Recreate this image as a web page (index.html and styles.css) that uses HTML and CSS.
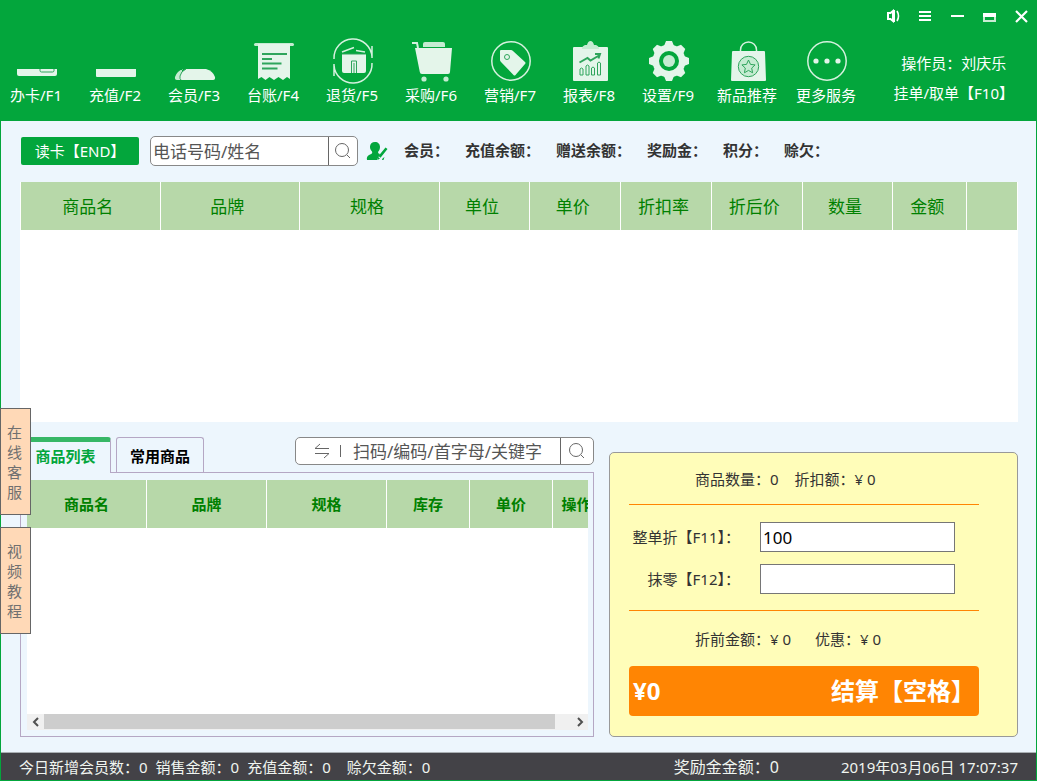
FILE: index.html
```html
<!DOCTYPE html>
<html lang="zh-CN">
<head>
  <meta charset="UTF-8" />
  <meta name="viewport" content="width=device-width, initial-scale=1.0"/>
  <title>收银台</title>
  <link rel="stylesheet" href="styles.css">
</head>
<body>
  <div class="app">
    <!-- Header -->
    <header class="header">
      <div class="window-bar">
        <button class="window-button" aria-label="声音">
          <svg width="14" height="14" viewBox="0 0 14 14" fill="none" stroke="#fff" stroke-width="2"><path d="M2 4h2.500L7 2v10L4.500 10H2z"/><path d="M8 1v12"/><path d="M11 2q3 5 0 10" stroke-width="1.600"/></svg>
        </button>
        <button class="window-button" aria-label="菜单">
          <svg width="14" height="14" viewBox="0 0 14 14" fill="#fff"><path d="M1 2h12v2H1zM1 6h12v2H1zM1 10h12v2H1z"/></svg>
        </button>
        <button class="window-button" aria-label="最小化">
          <svg width="14" height="14" viewBox="0 0 14 14" fill="#fff"><path d="M1 6h13v2H1z"/></svg>
        </button>
        <button class="window-button" aria-label="最大化">
          <svg width="14" height="14" viewBox="0 0 14 14"><path d="M1 4h13v4H1z" fill="#fff"/><path d="M1 8h13v5H1zM3 8v3h9V8z" fill="#c9ecd3" fill-rule="evenodd"/></svg>
        </button>
        <button class="window-button" aria-label="关闭">
          <svg width="14" height="14" viewBox="0 0 14 14" stroke="#fff" stroke-width="2.200"><path d="M2 2l11 11M13 2L2 13"/></svg>
        </button>
      </div>

      <div class="header-main">
        <nav class="menu">
          <a class="menu-item" href="#">
            <svg viewBox="0 0 41 41"><path class="light" d="M1 28h40v5q0 2-2 2H3q-2 0-2-2z"/><path class="line" d="M24 28v1.500q0 1.500 1.500 1.500h11q1.500 0 1.500-1.500V28"/></svg>
            <span>办卡/F1</span>
          </a>
          <a class="menu-item" href="#">
            <svg viewBox="0 0 41 41"><path class="light" d="M1 28h40v7q0 1-1 1H2q-1 0-1-1z"/></svg>
            <span>充值/F2</span>
          </a>
          <a class="menu-item" href="#">
            <svg viewBox="0 0 41 41"><path class="soft" d="M9 28Q3 30 1 36q-.500 3 2 3h5V28z"/><path class="light" d="M12 28h20q7 2 9 8 .500 3-2 3H8q-3 0-2-4 2-5 6-7z"/><path class="line" d="M12 28q-5 2-6 7-.500 3 1 4"/></svg>
            <span>会员/F3</span>
          </a>
          <a class="menu-item" href="#">
            <svg viewBox="0 0 41 41"><rect class="soft" x="1" y="2" width="40" height="3" rx="1.500"/><path class="light" d="M5 3h32v35l-3-2-4 3-4.500-3-4.500 3-4.500-3-4 3-4-3L5 38z"/><path class="line thick" d="M9 13h25M9 18h10M9 22.500h19.500M9 27.500h15.500"/></svg>
            <span>台账/F4</span>
          </a>
          <a class="menu-item" href="#">
            <svg viewBox="0 0 41 41"><path class="stroke" d="M2 18a19 19 0 0 1 38-2M40 22a19 19 0 0 1-38 2M40 5v12M2 35V23"/><path class="light" d="M10 13h24v17q0 2-2 2H12q-2 0-2-2z"/><path class="stroke" d="M10 11l12-4.500M24 9.500l9 1.500"/><path class="line" d="M19.500 32V20h5v12M22 22v10M10 13h24"/></svg>
            <span>退货/F5</span>
          </a>
          <a class="menu-item" href="#">
            <svg viewBox="0 0 41 41"><path class="soft" d="M12 6V3q0-2 2-2h18q2 0 2 2v3z"/><path class="light" d="M4 7h37l-2 24q0 2-2 2H11q-2 0-2.200-2z"/><path class="stroke thick" d="M1 2h5l1 5"/><circle class="soft" cx="13" cy="38" r="2.600"/><circle class="soft" cx="35" cy="38" r="2.600"/></svg>
            <span>采购/F6</span>
          </a>
          <a class="menu-item" href="#">
            <svg viewBox="0 0 41 41"><circle class="stroke" cx="21" cy="20" r="19.200"/><path class="light" d="M11 9h10q1 0 2 1l12 11q1 1 0 2L25.500 34q-1 1-2 0L11 21q-1-1-1-2v-9q0-1 1-1z"/><circle class="line" cx="17" cy="16" r="2.500"/></svg>
            <span>营销/F7</span>
          </a>
          <a class="menu-item" href="#">
            <svg viewBox="0 0 41 41"><rect class="light" x="4" y="6" width="35" height="34" rx="1"/><path class="soft" d="M13 8q0-3 3-4h2q1-4 3.500-4T25 4h2q3 1 3 4z"/><path class="line thick" d="M10.500 21.500l8-4.500 3 2.500 8.500-5M26 13h5l-1.500 4.500"/><path class="line" d="M11 34v-6q1.500-2 3 0v6zM17 34v-9q1.500-2 3 0v9zM22.500 34v-7q1.500-2 3 0v7zM28.500 34V22q1.500-2 3 0v12z"/></svg>
            <span>报表/F8</span>
          </a>
          <a class="menu-item" href="#">
            <svg viewBox="0 0 41 41"><circle class="light" cx="21" cy="20" r="16.500"/><g class="light"><path id="tooth" d="M16 5l2-5h6l2 5v30l-2 5h-6l-2-5z"/><use href="#tooth" transform="rotate(45 21 20)"/><use href="#tooth" transform="rotate(90 21 20)"/><use href="#tooth" transform="rotate(135 21 20)"/></g><circle cx="21" cy="20" r="10" fill="#03a63c"/><circle class="soft" cx="21" cy="20" r="6"/></svg>
            <span>设置/F9</span>
          </a>
          <a class="menu-item" href="#">
            <svg viewBox="0 0 41 41"><path class="stroke" d="M13.500 10V9a8 8 0 0 1 16 0v1"/><path class="light" d="M6 10h31q1 0 1 1l1 28q0 1-1 1H5q-1 0-1-1l1-28q0-1 1-1z"/><circle class="soft ring" cx="21.500" cy="25.500" r="10.200"/><path class="line" d="M21.500 19l2 4.400 4.600.500-3.400 3.200.900 4.700-4.100-2.400-4.100 2.400.900-4.700-3.400-3.200 4.600-.500z"/></svg>
            <span>新品推荐</span>
          </a>
          <a class="menu-item" href="#">
            <svg viewBox="0 0 41 41"><circle class="stroke" cx="21" cy="20" r="19.200"/><circle class="light" cx="10" cy="20" r="2.600"/><circle class="light" cx="21" cy="20" r="2.600"/><circle class="light" cx="32" cy="20" r="2.600"/></svg>
            <span>更多服务</span>
          </a>
        </nav>
        <div class="operator">
          <span>操作员：刘庆乐</span>
          <a href="#">挂单/取单【F10】</a>
        </div>
      </div>
    </header>

    <main class="main">
      <!-- Member search -->
      <div class="member-bar">
        <button class="read-card">读卡【END】</button>
        <form class="search member-search">
          <input type="text" placeholder="电话号码/姓名" aria-label="电话号码/姓名">
          <button type="button" aria-label="搜索会员">
            <svg width="18" height="18" viewBox="0 0 18 18" fill="none" stroke="#666" stroke-width="1"><circle cx="8" cy="8" r="6.500"/><path d="M13 13l3 3"/></svg>
          </button>
        </form>
        <button class="edit-member" aria-label="编辑会员">
          <svg width="22" height="20" viewBox="0 0 22 20" fill="#03a63c"><path d="M9 1c3 0 5 2 5 5 0 2-1 4-2 5 0 1 1 2 2 2l-3 6H1q-1-4 3-5.500 3-1 2-3C4 8 4 7 4 5.500 4 3 6 1 9 1z"/><path d="M19.500 6.500l2 1.600-7 8.600-2-1.600zM12 16l2 1.600L11.500 19zM16.500 17.500l2-1.500-1 3h-1.500z"/></svg>
        </button>
        <div class="member-info">
          <span>会员：</span>
          <span>充值余额：</span>
          <span>赠送余额：</span>
          <span>奖励金：</span>
          <span>积分：</span>
          <span>赊欠：</span>
        </div>
      </div>

      <!-- Cart -->
      <div class="cart">
        <table class="table">
          <colgroup>
            <col class="w-140"><col class="w-140"><col class="w-140"><col class="w-91"><col class="w-91">
            <col class="w-91"><col class="w-91"><col class="w-91"><col class="w-74"><col>
          </colgroup>
          <thead>
            <tr>
              <th>商品名</th><th>品牌</th><th>规格</th><th>单位</th><th>单价</th>
              <th>折扣率</th><th>折后价</th><th>数量</th><th>金额</th><th></th>
            </tr>
          </thead>
        </table>
      </div>

      <div class="bottom">
        <!-- Goods list -->
        <section class="goods">
          <div class="goods-top">
            <button class="tab active">商品列表</button>
            <button class="tab">常用商品</button>
            <form class="search scan-search">
              <svg width="18" height="16" viewBox="0 0 18 16" fill="none" stroke="#666"><path d="M16 5.500H2l5-4.500M2 10.500h14L11 15"/></svg>
              <i class="divider"></i>
              <input type="text" placeholder="扫码/编码/首字母/关键字" aria-label="扫码/编码/首字母/关键字">
              <button type="button" aria-label="搜索商品">
                <svg width="18" height="18" viewBox="0 0 18 18" fill="none" stroke="#666" stroke-width="1"><circle cx="8" cy="8" r="6.500"/><path d="M13 13l3 3"/></svg>
              </button>
            </form>
          </div>
          <div class="goods-panel">
            <div class="goods-list">
              <table class="table goods-table">
                <colgroup>
                  <col class="w-120"><col class="w-120"><col class="w-120"><col class="w-83"><col class="w-83"><col>
                </colgroup>
                <thead>
                  <tr><th>商品名</th><th>品牌</th><th>规格</th><th>库存</th><th>单价</th><th>操作</th></tr>
                </thead>
              </table>
            </div>
            <div class="scrollbar">
              <button aria-label="向左"><svg width="8" height="10" viewBox="0 0 8 10"><path d="M6 1L2 5l4 4" fill="none" stroke="#505050" stroke-width="2"/></svg></button>
              <div class="scroll-track"><div class="scroll-thumb"></div></div>
              <button aria-label="向右"><svg width="8" height="10" viewBox="0 0 8 10"><path d="M2 1l4 4-4 4" fill="none" stroke="#505050" stroke-width="2"/></svg></button>
            </div>
          </div>
        </section>

        <!-- Checkout -->
        <section class="checkout">
          <div class="summary">
            <span>商品数量：0</span>
            <span>折扣额：¥ 0</span>
          </div>
          <div class="fields">
            <label for="discount">整单折【F11】：</label>
            <input type="text" id="discount" value="100">
            <label for="round">抹零【F12】：</label>
            <input type="text" id="round">
          </div>
          <div class="summary totals">
            <span>折前金额：¥ 0</span>
            <span>优惠：¥ 0</span>
          </div>
          <button class="pay"><span>¥0</span><span>结算【空格】</span></button>
        </section>
      </div>
    </main>

    <footer class="footer">
      <span>今日新增会员数：0</span>
      <span>销售金额：0</span>
      <span>充值金额：0</span>
      <span class="debt">赊欠金额：0</span>
      <span class="reward">奖励金金额：0</span>
      <span class="clock">2019年03月06日 17:07:37</span>
    </footer>

    <!-- Floating side buttons -->
    <div class="side">
      <button>在线客服</button>
      <button>视频教程</button>
    </div>
  </div>
</body>
</html>
```
FILE: styles.css
```css
* {
  box-sizing: border-box;
}

body {
  margin: 0;
  font-family: "Noto Sans", "Noto Sans CJK SC", sans-serif;
  font-size: 15px;
  line-height: 20px;
  color: #333;
}

button,
input {
  font: inherit;
  color: inherit;
  margin: 0;
  padding: 0;
  border: none;
  background: none;
}

button {
  cursor: pointer;
}

a {
  color: inherit;
  text-decoration: none;
}

svg {
  display: block;
}

.app {
  position: relative;
  min-height: 100vh;
  display: flex;
  flex-direction: column;
  border: 1px solid #03a63c;
  background-color: #edf6fd;
}

/* header */
.header {
  height: 120px;
  background-color: #03a63c;
  color: #fff;
}

.window-bar {
  display: flex;
  justify-content: flex-end;
  gap: 2px;
  height: 30px;
}

.window-button {
  width: 30px;
  display: flex;
  align-items: center;
  justify-content: center;
}

.header-main {
  display: flex;
  justify-content: space-between;
  padding-top: 10px;
}

.menu {
  display: flex;
  gap: 9px;
}

.menu-item {
  width: 70px;
  display: flex;
  flex-direction: column;
  align-items: center;
  gap: 3px;
  white-space: nowrap;
}

.menu-item svg {
  width: 41px;
  height: 41px;
  overflow: visible;
}

.light {
  fill: #e4f5ea;
}

.soft {
  fill: #c5ecd2;
}

.line {
  fill: none;
  stroke: #2fa55c;
  stroke-width: 1;
}

.stroke {
  fill: none;
  stroke: #d5f1de;
  stroke-width: 1.5;
}

.ring {
  stroke: #2fa55c;
}

.line.thick,
.stroke.thick {
  stroke-width: 2;
}

.operator {
  display: flex;
  flex-direction: column;
  align-items: center;
  gap: 10px;
  padding: 12px 22px 0 0;
  white-space: nowrap;
}

/* main */
.main {
  flex: 1;
  display: flex;
  flex-direction: column;
  padding: 15px 18px 15px 19px;
}

.member-bar {
  display: flex;
  align-items: center;
  margin-bottom: 16px;
}

.read-card {
  width: 118px;
  height: 28px;
  margin: 0 11px 0 1px;
  background-color: #03a63c;
  color: #fff;
  border-radius: 2px;
}

.search {
  display: flex;
  align-items: center;
  border: 1px solid #888;
  border-radius: 5px;
  background-color: #fff;
  font-size: 17px;
}

.search input {
  flex: 1;
  min-width: 0;
  height: 100%;
  outline: none;
}

.search input::placeholder {
  color: #555;
}

.search button {
  width: 29px;
  height: 100%;
  display: flex;
  align-items: center;
  justify-content: center;
  border-left: 1px solid #666;
}

.member-search {
  width: 208px;
  height: 30px;
}

.member-search input {
  padding-left: 2px;
}

.edit-member {
  margin: 0 16px 0 8px;
}

.member-info {
  display: flex;
  gap: 16px;
  padding-bottom: 2px;
  font-weight: bold;
}

.cart {
  flex: 1;
  min-height: 240px;
  padding-left: 1px;
  background-color: #fff;
}

.table {
  width: 100%;
  table-layout: fixed;
  border-collapse: separate;
  border-spacing: 0;
  color: #008000;
}

.table th {
  height: 48px;
  padding: 2px 5px 0 0;
  background-color: #b7d8a9;
  border-right: 1px solid #fff;
  font-weight: normal;
  font-size: 17px;
  white-space: nowrap;
}

.w-140 { width: 14%; }
.w-91 { width: 9.1%; }
.w-74 { width: 7.4%; }
.w-120 { width: 120px; }
.w-83 { width: 83px; }

.bottom {
  display: grid;
  grid-template-columns: 574fr 409fr;
  gap: 15px;
  padding-top: 15px;
}

/* goods list */
.goods {
  min-width: 0;
}

.goods-top {
  display: flex;
  height: 36px;
}

.tab {
  width: 88px;
  height: 35px;
  padding-top: 2px;
  border: 1px solid #b5a7c4;
  border-bottom: none;
  border-radius: 3px 3px 0 0;
  color: #000;
  font-weight: bold;
}

.tab.active {
  width: 91px;
  height: 36px;
  margin-right: 5px;
  padding: 0 0 3px;
  border-top: 5px solid #37b766;
  background-color: #edf6fd;
  color: #03a63c;
  z-index: 1;
}

.scan-search {
  width: 299px;
  height: 28px;
  margin-left: auto;
}

.scan-search > svg {
  margin-left: 17px;
}

.divider {
  width: 1px;
  height: 12px;
  margin: 0 12px 0 9px;
  background-color: #666;
}

.scan-search button {
  width: 33px;
}

.goods-panel {
  margin-top: -1px;
  padding: 7px 5px 6px 6px;
  border: 1px solid #b5a7c4;
}

.goods-list {
  height: 234px;
  overflow: hidden;
  background-color: #fff;
}

.goods-table {
  width: 574px;
}

.goods-table th {
  padding: 0;
  font-size: 15px;
  font-weight: bold;
}

.scrollbar {
  display: flex;
  height: 16px;
  background-color: #f0f0f0;
}

.scrollbar button {
  width: 17px;
  display: flex;
  align-items: center;
  justify-content: center;
}

.scroll-track {
  flex: 1;
}

.scroll-thumb {
  width: 97%;
  height: 15px;
  background-color: #cdcdcd;
}

/* checkout */
.checkout {
  min-width: 0;
  margin-top: 15px;
  padding: 0 38px 20px 19px;
  border: 1px solid #999;
  border-radius: 5px;
  background-color: #fffdb9;
}

.summary {
  display: flex;
  align-items: center;
  gap: 16px;
  height: 51px;
  padding-left: 66px;
  white-space: nowrap;
}

.totals {
  height: 55px;
  gap: 24px;
}

.fields {
  display: grid;
  grid-template-columns: 1fr 195px;
  gap: 12px 20px;
  align-items: center;
  padding: 17px 24px 16px 0;
  border-top: 1px solid #ff8503;
  border-bottom: 1px solid #ff8503;
}

.fields label {
  text-align: right;
  white-space: nowrap;
}

.fields input {
  width: 100%;
  height: 30px;
  padding: 0 2px;
  border: 1px solid #767676;
  background-color: #fff;
  color: #000;
  font-size: 17px;
}

.pay {
  width: 100%;
  height: 50px;
  padding: 0 4px;
  display: flex;
  align-items: center;
  justify-content: space-between;
  border-radius: 4px;
  background-color: #ff8503;
  color: #fff;
  font-size: 24px;
  font-weight: bold;
}

/* footer */
.footer {
  display: flex;
  align-items: center;
  gap: 8px;
  height: 28px;
  padding: 0 18px;
  border-top: 1px solid #aab0b4;
  background-color: #434247;
  color: #f0f5f0;
  white-space: nowrap;
}

.debt {
  margin-left: 8px;
}

.reward {
  margin-left: auto;
  font-size: 16px;
}

.clock {
  margin-left: 54px;
}

/* side buttons */
.side {
  position: absolute;
  left: -1px;
  bottom: 146px;
  z-index: 2;
  display: flex;
  flex-direction: column;
  gap: 12px;
}

.side button {
  width: 31px;
  height: 107px;
  padding: 0 8px 0 6px;
  border: 1px solid #666;
  background-color: #ffd9b7;
  color: #707070;
  word-break: break-all;
}
```
